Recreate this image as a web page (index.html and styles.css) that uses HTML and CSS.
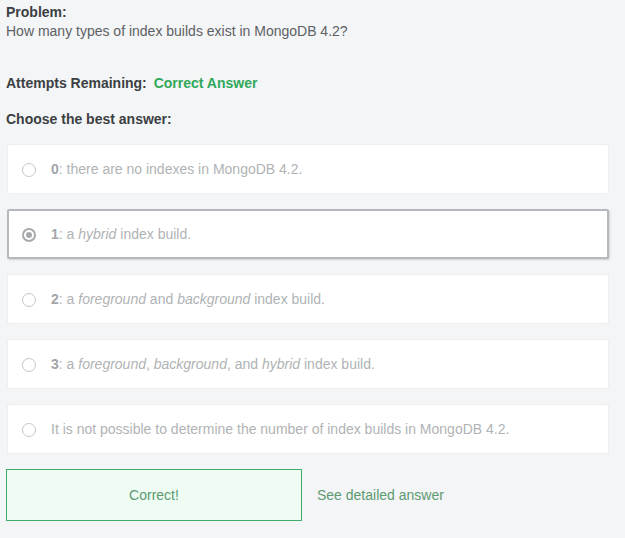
FILE: index.html
```html
<!DOCTYPE html>
<html>
<head>
<meta charset="utf-8">
<link rel="stylesheet" href="styles.css">
</head>
<body>
<div class="page">
  <div class="problem">
    <div class="label">Problem:</div>
    <div class="question">How many types of index builds exist in MongoDB 4.2?</div>
  </div>
  <div class="attempts"><span class="label">Attempts Remaining:</span> <span class="correct-answer">Correct Answer</span></div>
  <div class="choose label">Choose the best answer:</div>
  <div class="options">
    <div class="option"><span class="radio"></span><span class="text"><b>0</b>: there are no indexes in MongoDB 4.2.</span></div>
    <div class="option selected"><span class="radio checked"></span><span class="text"><b>1</b>: a <i>hybrid</i> index build.</span></div>
    <div class="option"><span class="radio"></span><span class="text"><b>2</b>: a <i>foreground</i> and <i>background</i> index build.</span></div>
    <div class="option"><span class="radio"></span><span class="text"><b>3</b>: a <i>foreground</i>, <i>background</i>, and <i>hybrid</i> index build.</span></div>
    <div class="option"><span class="radio"></span><span class="text">It is not possible to determine the number of index builds in MongoDB 4.2.</span></div>
  </div>
  <div class="actions">
    <div class="result">Correct!</div>
    <a class="detail">See detailed answer</a>
  </div>
</div>
</body>
</html>
```
FILE: styles.css
```css
html, body {
  margin: 0;
  padding: 0;
  background: #f4f5f7;
}
body {
  font-family: "Liberation Sans", Arial, sans-serif;
  font-size: 14px;
  color: #494c4f;
}
.page {
  width: 603px;
  padding: 3px 0 0 6px;
}
.label {
  font-weight: bold;
  color: #3b3f42;
}
.problem {
  line-height: 19px;
}
.question {
  color: #5d6164;
}
.attempts {
  margin-top: 33px;
  line-height: 19px;
}
.correct-answer {
  color: #2fa85a;
  font-weight: bold;
  margin-left: 3px;
}
.choose {
  margin-top: 17px;
  line-height: 19px;
}
.options {
  margin-top: 15px;
  margin-left: 1px;
  display: flex;
  flex-direction: column;
  gap: 15px;
}
.option {
  height: 48px;
  background: #fff;
  border: 1px solid #eceef0;
  border-radius: 2px;
  display: flex;
  align-items: center;
  padding-left: 14px;
  color: #b0b3b5;
}
.option b {
  color: #a3a6a9;
}
.option.selected {
  height: 46px;
  border: 2px solid #b5b9bd;
  padding-left: 13px;
  box-shadow: 1px 1px 2px rgba(0,0,0,0.15);
}
.radio {
  width: 12px;
  height: 12px;
  border: 1px solid #c4c6c8;
  border-radius: 50%;
  margin-right: 15px;
  margin-top: 2px;
  box-sizing: content-box;
  position: relative;
  flex: none;
}
.radio.checked {
  border: 2px solid #a7aaad;
  width: 10px;
  height: 10px;
}
.radio.checked::after {
  content: "";
  position: absolute;
  left: 2px;
  top: 2px;
  width: 6px;
  height: 6px;
  border-radius: 50%;
  background: #a7aaad;
}
.actions {
  margin-top: 15px;
  display: flex;
  align-items: center;
}
.result {
  width: 294px;
  height: 50px;
  border: 1px solid #3ead6a;
  background: #effcf3;
  color: #5c9a72;
  display: flex;
  align-items: center;
  justify-content: center;
}
.detail {
  margin-left: 15px;
  color: #5c9a72;
}
```
